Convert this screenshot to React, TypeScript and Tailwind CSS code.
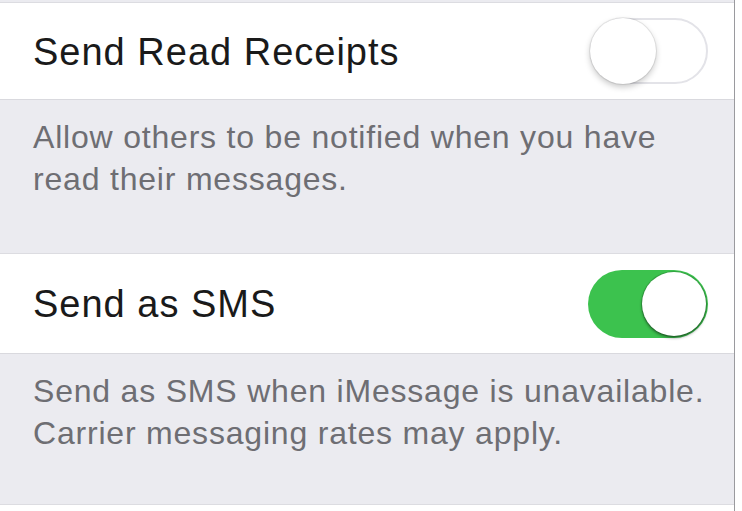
const Toggle = ({ on }: { on: boolean }) => {
  if (on) {
    return (
      <div className="flex h-[68px] w-[120px] items-center justify-end rounded-full bg-[#3cc24e] p-[2px]">
        <div className="h-[64px] w-[64px] rounded-full bg-white shadow-[0_2px_3px_rgba(0,0,0,0.45),0_0_0_1px_rgba(0,0,0,0.15)]" />
      </div>
    )
  }
  return (
    <div className="flex h-[66px] w-[118px] items-center rounded-full border-2 border-[#e3e3e8] bg-white">
      <div className="-ml-[2px] h-[66px] w-[66px] rounded-full bg-white shadow-[0_3px_6px_rgba(0,0,0,0.22),0_0_0_1px_rgba(0,0,0,0.08)]" />
    </div>
  )
}

const Row = ({ label, on }: { label: string; on: boolean }) => (
  <div className="flex items-center justify-between border-b border-[#d9d9de] bg-white pl-[33px] pr-[26px]">
    <span className="pt-[2px] text-[38px] tracking-[1px] text-[#1a1a1a]">{label}</span>
    <Toggle on={on} />
  </div>
)

const Footer = ({ lines }: { lines: string[] }) => (
  <div className="border-b border-[#dcdce1] bg-[#ebebf0] pl-[33px] pt-4">
    {lines.map((l) => (
      <div key={l} className="text-[32px] leading-[42px] tracking-[0.8px] text-[#6e6e73]">
        {l}
      </div>
    ))}
  </div>
)

export default function App() {
  return (
    <div className="flex h-[511px] w-[742px] overflow-hidden bg-white font-['Liberation_Sans',Arial,sans-serif]">
      <div className="flex w-[735px] flex-col border-r border-[#9a9a9e]">
        <div className="h-[3px] border-b border-[#dcdce1] bg-[#ebebf0]" />
        <div className="h-[97px] [&>div]:h-full">
          <Row label="Send Read Receipts" on={false} />
        </div>
        <div className="h-[154px] [&>div]:h-full">
          <Footer lines={["Allow others to be notified when you have", "read their messages."]} />
        </div>
        <div className="h-[100px] [&>div]:h-full">
          <Row label="Send as SMS" on={true} />
        </div>
        <div className="h-[151px] [&>div]:h-full">
          <Footer lines={["Send as SMS when iMessage is unavailable.", "Carrier messaging rates may apply."]} />
        </div>
        <div className="flex-1 bg-white" />
      </div>
    </div>
  )
}
